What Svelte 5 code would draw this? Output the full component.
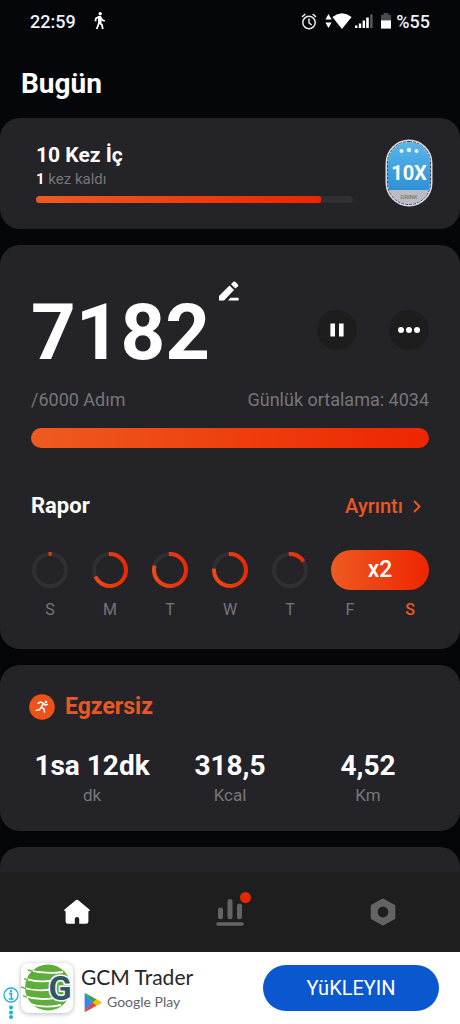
<script>
    const steps = 7182;
    const goal = 6000;
    const average = 4034;

    const drink = { title: "10 Kez İç", left: 1, percent: 90 };

    const ringLength = 2 * Math.PI * 16;

    let days = [
        { label: "S", percent: 3, ring: true },
        { label: "M", percent: 69, ring: true },
        { label: "T", percent: 80, ring: true },
        { label: "W", percent: 77, ring: true },
        { label: "T", percent: 17, ring: true },
        { label: "F", ring: false },
        { label: "S", ring: false, today: true },
    ];

    let stats = [
        { value: "1sa 12dk", unit: "dk" },
        { value: "318,5", unit: "Kcal" },
        { value: "4,52", unit: "Km" },
    ];
</script>

<div class="screen">
    <header class="status">
        <span class="clock">22:59</span>
        <svg class="walker" width="12" height="18" viewBox="0 0 12 18">
            <circle cx="6.2" cy="1.8" r="1.7" fill="#fff" />
            <path d="M5.6 4.6 L5.2 10.4 L8 13 L8.8 17 M5 10.6 L4.2 13.4 L2.6 17 M4.8 4.8 L1.8 6.6 L1.4 9.4 M6.6 5.4 L8.2 8 L10.8 9" fill="none" stroke="#fff" stroke-width="1.8" />
            <path d="M4 4 H7.2 L7.6 11 H4.2 Z" fill="#fff" />
        </svg>
        <div class="tray">
            <svg width="16" height="17" viewBox="0 0 16 17" fill="none" stroke="#e8e8ea" stroke-width="1.5">
                <circle cx="8" cy="9.5" r="6.2" />
                <path d="M8 5.6 V9.8 L10.6 12 M1 3.8 L4.4 1 M15 3.8 L11.6 1" />
            </svg>
            <svg class="arrows" width="7" height="14" viewBox="0 0 7 14" fill="#fff">
                <path d="M3.5 0 L6.6 5.6 H0.4 Z M3.5 14 L6.6 8.4 H0.4 Z" />
            </svg>
            <svg width="20" height="16" viewBox="0 0 20 16" fill="#fff">
                <path d="M0.4 4 Q10 -3.4 19.6 4 L10 16 Z" />
            </svg>
            <svg class="signal" width="18" height="14" viewBox="0 0 18 14" fill="#fff">
                <path d="M0 11.4h2.4V14H0z M3.8 9.4h2.4V14H3.8z M7.6 6.6H10V14H7.6z M11.2 3.4h2.6V14h-2.6z" />
                <path d="M15.2 0.4h2.4V14h-2.4z" fill="#5b5b5f" />
            </svg>
            <svg class="battery" width="10" height="16" viewBox="0 0 10 16">
                <path d="M0 2h2.6V0h4.8v2H10v6H0z" fill="#4b4b4f" />
                <path d="M0 7.4h10V15.6H0z" fill="#fff" />
            </svg>
            <span>%55</span>
        </div>
    </header>

    <main>
        <h1>Bugün</h1>

        <section class="card drink">
            <div class="drink-info">
                <h2>{drink.title}</h2>
                <p><b>{drink.left}</b> kez kaldı</p>
                <div class="track" role="progressbar" aria-label={drink.title} aria-valuenow={drink.percent}>
                    <div class="fill" style="width: {drink.percent}%"></div>
                </div>
            </div>
            <svg class="badge" width="48" height="68" viewBox="0 0 48 68">
                <defs>
                    <linearGradient id="water" x1="0" y1="0" x2="0" y2="1">
                        <stop offset="0" stop-color="#58b8ea" />
                        <stop offset="1" stop-color="#2e8fd6" />
                    </linearGradient>
                    <clipPath id="pill"><rect x="3" y="3" width="42" height="62" rx="21" /></clipPath>
                </defs>
                <rect x="0.5" y="0.5" width="47" height="67" rx="23.5" fill="#dcdce2" />
                <rect x="2.5" y="2.5" width="43" height="63" rx="21.5" fill="none" stroke="#34445a" stroke-dasharray="3 1" />
                <g clip-path="url(#pill)">
                    <rect x="3" y="3" width="42" height="49" fill="url(#water)" />
                    <rect x="3" y="51" width="42" height="15" fill="#b9bcc5" />
                </g>
                <circle cx="16.5" cy="12" r="2" fill="#e6f6ff" />
                <circle cx="24" cy="11" r="2.2" fill="#e6f6ff" />
                <circle cx="31.5" cy="12" r="2" fill="#e6f6ff" />
                <text x="24" y="41" class="badge-count">10X</text>
                <text x="24" y="60" class="badge-name">DRINK</text>
            </svg>
        </section>

        <section class="card steps">
            <div class="steps-top">
                <strong>{steps}</strong>
                <button class="edit" aria-label="Edit">
                    <svg width="20" height="20" viewBox="0 0 20 20" fill="#fff">
                        <path d="M0 15 L10.5 4.6 L15 9 L5 19.4 H0 Z" />
                        <path d="M12 3.2 L14.4 0.8 Q15.3 0 16.2 0.8 L18.9 3.5 Q19.7 4.4 18.9 5.2 L16.4 7.6 Z" />
                        <path d="M11.6 16.8 H19.6 V19.4 H9 Z" />
                    </svg>
                </button>
                <div class="actions">
                    <button class="round" aria-label="Pause">
                        <svg width="14" height="14" viewBox="0 0 14 14" fill="#fff">
                            <path d="M0.4 0.4h4.6v13.2H0.4z M9 0.4h4.6v13.2H9z" />
                        </svg>
                    </button>
                    <button class="round" aria-label="More">
                        <svg width="22" height="6" viewBox="0 0 22 6" fill="#fff">
                            <circle cx="3" cy="3" r="3" />
                            <circle cx="11" cy="3" r="3" />
                            <circle cx="19" cy="3" r="3" />
                        </svg>
                    </button>
                </div>
            </div>
            <div class="goal">
                <span>/{goal} Adım</span>
                <span>Günlük ortalama: {average}</span>
            </div>
            <div class="bar" role="progressbar" aria-label="Adım" aria-valuenow="100"></div>

            <div class="report-head">
                <h2>Rapor</h2>
                <a href="#detail">
                    Ayrıntı
                    <svg width="8" height="13" viewBox="0 0 8 13" fill="none" stroke="#ea5722" stroke-width="2">
                        <path d="M1 1 L6.6 6.5 L1 12" />
                    </svg>
                </a>
            </div>
            <div class="week">
                {#each days as day}
                    {#if day.ring}
                        <svg width="38" height="38" viewBox="0 0 38 38">
                            <defs>
                                <linearGradient id="heat" x1="0" y1="1" x2="0" y2="0">
                                    <stop offset="0" stop-color="#e92a05" />
                                    <stop offset="1" stop-color="#ee4a17" />
                                </linearGradient>
                            </defs>
                            <circle cx="19" cy="19" r="16" fill="none" stroke="#303034" stroke-width="4" />
                            <circle cx="19" cy="19" r="16" fill="none" stroke="url(#heat)" stroke-width="4"
                                stroke-dasharray="{ringLength * day.percent / 100} {ringLength}"
                                transform="rotate({day.percent < 5 ? -95 : -94} 19 19)" />
                        </svg>
                    {/if}
                {/each}
                <div class="streak">x2</div>
                {#each days as day}
                    <span class="day" class:today={day.today}>{day.label}</span>
                {/each}
            </div>
        </section>

        <section class="card exercise">
            <h2>
                <svg width="26" height="26" viewBox="0 0 26 26">
                    <circle cx="13" cy="13" r="12.8" fill="#ef5218" />
                    <circle cx="17" cy="8" r="1.3" fill="#fff" />
                    <path d="M9 9.4 L11.6 8 L14.6 9.4 L12.2 13.2 L15 15.2 L15.6 18 M11.8 13.6 L10.4 15.8 L7.2 16.2 M14.8 9.6 L16.2 11.2 L18.4 10.4" fill="none" stroke="#fff" stroke-width="1.5" stroke-linecap="round" stroke-linejoin="round" />
                </svg>
                Egzersiz
            </h2>
            <div class="stats">
                {#each stats as stat}
                    <div>
                        <b>{stat.value}</b>
                        <span>{stat.unit}</span>
                    </div>
                {/each}
            </div>
        </section>

        <section class="card next"></section>
    </main>

    <nav>
        <a href="#home" aria-label="Home">
            <svg width="28" height="26" viewBox="0 0 28 26">
                <path d="M14 0.8 Q14.8 0.8 15.6 1.6 L26.4 10.4 Q27.6 12 25.4 12.2 V22.4 Q25.4 24.8 23 24.8 H16.2 V20 Q16.2 18 14 18 Q11.8 18 11.8 20 V24.8 H5 Q2.6 24.8 2.6 22.4 V12.2 Q0.4 12 1.6 10.4 L12.4 1.6 Q13.2 0.8 14 0.8 Z" fill="#fff" />
            </svg>
        </a>
        <a href="#stats" aria-label="Statistics">
            <svg width="28" height="28" viewBox="0 0 28 28" stroke="#646464" stroke-linecap="round">
                <path d="M4.5 12 V18.8 M14 3.4 V18.8 M23.5 8 V18.8" stroke-width="5" />
                <path d="M2 26 H26" stroke-width="3.6" />
            </svg>
            <i class="dot"></i>
        </a>
        <a href="#settings" aria-label="Settings">
            <svg width="28" height="28" viewBox="0 0 28 28">
                <path d="M14 2 L24.8 8 V20 L14 26 L3.2 20 V8 Z" fill="#646464" stroke="#646464" stroke-width="3" stroke-linejoin="round" />
                <circle cx="14" cy="14" r="5.4" fill="#1e1e1f" />
            </svg>
        </a>
    </nav>

    <aside>
        <div class="ad-marks">
            <svg width="16" height="32" viewBox="0 0 16 32">
                <circle cx="8" cy="8" r="7" fill="none" stroke="#1fb0d8" stroke-width="1.3" />
                <path d="M6 6.6 H8.4 V11.8 M5.8 12 H10.6" fill="none" stroke="#1fb0d8" stroke-width="1.6" />
                <circle cx="8" cy="4" r="1.2" fill="#1fb0d8" />
                <circle cx="8" cy="20.6" r="2" fill="#1fb0d8" />
                <circle cx="8" cy="25.4" r="2" fill="#1fb0d8" />
                <circle cx="8" cy="30" r="2" fill="#1fb0d8" />
            </svg>
        </div>
        <svg class="logo" width="52" height="50" viewBox="0 0 52 50">
            <circle cx="27" cy="24.5" r="23" fill="#5fae3c" />
            <path d="M7 7 Q24 11.6 42 9 M3 15.6 Q22 21 40 15.6 M0 24 Q16 29.4 32 26 M2 32.6 Q20 39 38 34 M7 40 Q22 46 40 42" fill="none" stroke="#fff" stroke-width="1.8" />
            <path d="M7 7 L12 8.4 M3 15.6 L7 16.8 M0 24 L5 25.6 M2 32.6 L6 34.2" fill="none" stroke="#5fae3c" stroke-width="1.4" />
            <text x="39" y="37" class="logo-letter">G</text>
        </svg>
        <div class="ad-text">
            <span class="ad-name">GCM Trader</span>
            <span class="store">
                <svg width="18" height="19" viewBox="0 0 18 19">
                    <path d="M0.6 1 L9 9.5 L0.6 18 Z" fill="#3b82f0" />
                    <path d="M0.6 18 Q0.2 19.2 2 18.6 L12.8 12.6 L9 9.2 Z" fill="#e94335" />
                    <path d="M0.6 1 Q0.2 -0.2 2 0.4 L12.8 6.4 L9 9.8 Z" fill="#31a650" />
                    <path d="M12.6 6.2 L17.2 8.8 Q18 9.5 17.2 10.2 L12.6 12.8 L9 9.5 Z" fill="#fabc05" />
                </svg>
                Google Play
            </span>
        </div>
        <button class="install">YüKLEYIN</button>
    </aside>
</div>

<style>
    :global(body) {
        margin: 0;
        background: #05060a;
    }

    .screen {
        display: flex;
        flex-direction: column;
        height: 100vh;
        overflow: hidden;
        color: #fff;
        font-family: Roboto, "Liberation Sans", sans-serif;
    }

    h1, h2, p {
        margin: 0;
    }

    button {
        display: flex;
        align-items: center;
        justify-content: center;
        border: 0;
        padding: 0;
        background: none;
        font-family: inherit;
        cursor: pointer;
    }

    a {
        text-decoration: none;
    }

    svg {
        display: block;
        flex: none;
    }

    .status {
        display: flex;
        align-items: center;
        height: 42px;
        padding: 0 30px;
        color: #f1f1f3;
        font-size: 18px;
        font-weight: 500;
    }

    .walker {
        margin-left: 18px;
    }

    .tray {
        display: flex;
        align-items: center;
        margin-left: auto;
    }

    .arrows {
        margin-left: 8px;
    }

    .signal {
        margin: 0 8px 0 3px;
    }

    .battery {
        margin-right: 5px;
    }

    main {
        flex: 1;
        min-height: 0;
        overflow: hidden;
    }

    h1 {
        padding: 24px 21px 16px;
        font-size: 28px;
        line-height: 36px;
    }

    .card {
        margin-bottom: 16px;
        border-radius: 20px;
        background: #242327;
    }

    .drink {
        display: flex;
        align-items: center;
        gap: 32px;
        padding: 21px 27px 22px 36px;
    }

    .drink-info {
        flex: 1;
    }

    .drink h2 {
        font-size: 21px;
        line-height: 24px;
    }

    .drink p {
        margin: 2px 0 7px;
        color: #77767a;
        font-size: 15px;
        line-height: 20px;
    }

    .drink p b {
        color: #fff;
    }

    .track {
        height: 7px;
        border-radius: 4px;
        background: #303033;
        overflow: hidden;
    }

    .fill {
        height: 100%;
        border-radius: 0 2px 2px 0;
        background: linear-gradient(90deg, #ee5a22, #ee2500);
    }

    .badge-count {
        fill: #fff;
        font-size: 20px;
        font-weight: bold;
        text-anchor: middle;
    }

    .badge-name {
        fill: #62656e;
        font-size: 6px;
        text-anchor: middle;
    }

    .steps {
        padding: 36px 20px 29px;
    }

    .steps-top {
        display: flex;
        align-items: flex-end;
        padding: 0 11px 16px;
    }

    .steps-top strong {
        margin-top: 13px;
        font-size: 78px;
        line-height: 78px;
    }

    .edit {
        align-self: flex-start;
        margin-left: 9px;
    }

    .actions {
        display: flex;
        gap: 32px;
        margin-left: auto;
        padding-bottom: 22px;
    }

    .round {
        width: 40px;
        height: 40px;
        border-radius: 50%;
        background: #1d1d1e;
    }

    .goal {
        display: flex;
        justify-content: space-between;
        padding: 0 11px;
        color: #77767a;
        font-size: 18px;
        line-height: 24px;
    }

    .bar {
        height: 20px;
        margin: 16px 11px 0;
        border-radius: 10px;
        background: linear-gradient(90deg, #ee5a22, #ee2500);
    }

    .report-head {
        display: flex;
        align-items: center;
        justify-content: space-between;
        padding: 44px 19px 30px 11px;
        line-height: 28px;
    }

    .report-head h2 {
        font-size: 22px;
    }

    .report-head a {
        display: flex;
        align-items: center;
        gap: 10px;
        color: #ea5722;
        font-size: 20px;
        font-weight: 500;
    }

    .week {
        display: grid;
        grid-template-columns: repeat(7, 1fr);
        row-gap: 10px;
        align-items: center;
        justify-items: center;
    }

    .streak {
        grid-column: 6 / 8;
        justify-self: stretch;
        margin: 0 11px;
        border-radius: 20px;
        background: linear-gradient(90deg, #ee5a22, #ee2500);
        font-size: 23px;
        font-weight: 500;
        line-height: 40px;
        text-align: center;
    }

    .day {
        color: #77767a;
        font-size: 16px;
        line-height: 20px;
    }

    .today {
        color: #ea5722;
        font-weight: 500;
    }

    .exercise {
        padding: 28px 23px 24px;
    }

    .exercise h2 {
        display: flex;
        align-items: center;
        gap: 10px;
        padding-left: 6px;
        color: #ea5722;
        font-size: 23px;
        line-height: 28px;
    }

    .stats {
        display: grid;
        grid-template-columns: repeat(3, 1fr);
        margin-top: 28px;
        text-align: center;
    }

    .stats b {
        display: block;
        font-size: 28px;
        line-height: 34px;
    }

    .stats span {
        color: #77767a;
        font-size: 17px;
        line-height: 24px;
    }

    .next {
        height: 120px;
    }

    nav {
        display: flex;
        align-items: center;
        height: 80px;
        background: #1e1e1f;
    }

    nav a {
        position: relative;
        display: flex;
        flex: 1;
        justify-content: center;
    }

    .dot {
        position: absolute;
        top: -6px;
        left: calc(50% + 10px);
        width: 11px;
        height: 11px;
        border-radius: 50%;
        background: #e62602;
    }

    aside {
        display: flex;
        align-items: center;
        height: 72px;
        padding: 0 21px 0 3px;
        background: #fff;
    }

    .ad-marks {
        align-self: flex-end;
        padding-bottom: 5px;
    }

    .logo {
        border-radius: 8px;
        box-shadow: 0 1px 5px #b8b8b8;
        background: #fff;
        margin-left: 2px;
    }

    .logo-letter {
        fill: #2f566e;
        stroke: #fff;
        stroke-width: 3px;
        paint-order: stroke;
        font-size: 34px;
        font-weight: bold;
        text-anchor: middle;
    }

    .ad-text {
        display: flex;
        flex-direction: column;
        gap: 2px;
        margin-left: 8px;
        color: #26272b;
        font-family: Lato, sans-serif;
    }

    .ad-name {
        font-size: 21px;
        line-height: 26px;
    }

    .store {
        display: flex;
        align-items: center;
        gap: 5px;
        margin-left: 3px;
        color: #5f6368;
        font-size: 14px;
        line-height: 20px;
    }

    .install {
        width: 176px;
        height: 46px;
        margin-left: auto;
        border-radius: 23px;
        background: #0b57d0;
        color: #fff;
        font-size: 20px;
    }
</style>
